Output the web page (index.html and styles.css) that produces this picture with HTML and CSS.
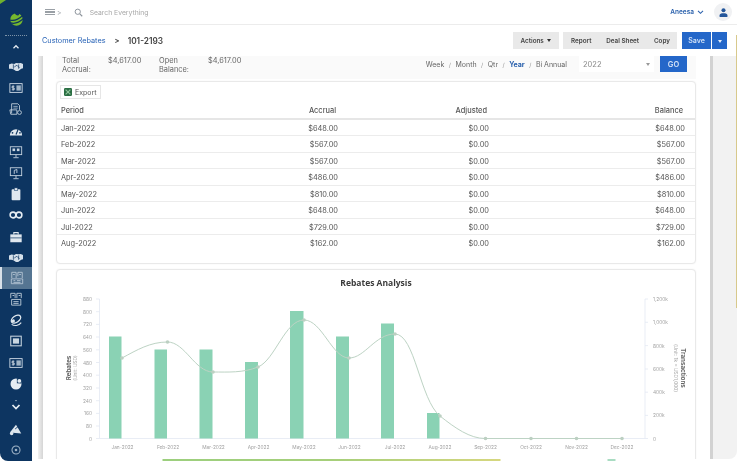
FILE: index.html
```html
<!DOCTYPE html>
<html lang="en">
<head>
<meta charset="utf-8">
<title>Customer Rebates</title>
<link rel="stylesheet" href="styles.css">
</head>
<body>
<div class="app">
  <nav class="side">
    <div class="logo">
      <svg viewBox="0 0 16 16" width="15" height="15"><circle cx="8" cy="8" r="6.6" fill="#76b82f"/><path d="M1 8.5C5 10 10 8 15 3.5M1.5 11.5C6 13 11 11 15.5 7" fill="none" stroke="#0d3561" stroke-width="1.3"/><path d="M6 .5C6.5 3 8.5 4 10.5 3.5L11 .5z" fill="#0d3561"/></svg>
    </div>
    <div class="rule"></div>
    <ul class="icons">
      <li class="nav-up"><svg viewBox="0 0 16 16"><path d="M4 10l4-4 4 4" fill="none" stroke="#e6edf3" stroke-width="2"/></svg></li>
      <li><svg viewBox="0 0 16 16"><path d="M0 5l3-1 3 .5 2-1 3 .2 2.500-.2 2.500 1v5l-2 .5-3.500 2.500H8L5 10.500 2.500 10 0 10z" fill="#d5e0ea"/><path d="M5 5v5M11 5v5M6 8l3-2 3 3" fill="none" stroke="#0d3561" stroke-width=".8"/></svg></li>
      <li><svg viewBox="0 0 16 16"><rect x="1" y="3" width="14" height="10" fill="none" stroke="#d5e0ea" stroke-width="1"/><rect x="8.500" y="5" width="5" height="6" fill="#9fb3c6"/><path d="M6.200 6H3.500v2h2.500v2H3.200M4.700 5v6" fill="none" stroke="#e6edf3" stroke-width=".8"/></svg></li>
      <li><svg viewBox="0 0 16 16"><path d="M3 13V2h7l2 2v5" fill="none" stroke="#c2d0dc" stroke-width="1"/><path d="M1 9h8v5H2z" fill="none" stroke="#c2d0dc" stroke-width="1"/><circle cx="12" cy="12" r="2.200" fill="none" stroke="#c2d0dc" stroke-width="1"/><path d="M5 5h5M5 7h5" stroke="#c2d0dc" stroke-width=".8"/></svg></li>
      <li><svg viewBox="0 0 16 16"><path d="M1 13a7 7 0 1 1 14 0z" fill="#e0e8ef"/><path d="M8 12l2.500-6" stroke="#0d3561" stroke-width="1.300"/><circle cx="4" cy="10" r="1" fill="#0d3561"/><circle cx="12.500" cy="10" r="1" fill="#0d3561"/></svg></li>
      <li><svg viewBox="0 0 16 16"><rect x="1.500" y="2" width="13" height="9" fill="none" stroke="#c9d6e1" stroke-width="1"/><path d="M8 11v3M5 14.500h6" stroke="#c9d6e1" stroke-width="1"/><rect x="4" y="4" width="3" height="3" fill="#c9d6e1"/><rect x="9" y="4" width="3" height="3" fill="#c9d6e1"/></svg></li>
      <li><svg viewBox="0 0 16 16"><rect x="1.500" y="2" width="13" height="9" fill="none" stroke="#c9d6e1" stroke-width="1"/><path d="M8 11v3M5 14.500h6" stroke="#c9d6e1" stroke-width="1"/><path d="M6 9V5l3-1v4" fill="none" stroke="#c9d6e1"/></svg></li>
      <li><svg viewBox="0 0 16 16"><rect x="3" y="2.500" width="10" height="12.500" rx="1" fill="#e0e8ef"/><rect x="6" y="1" width="4" height="3" fill="#e0e8ef" stroke="#0d3561" stroke-width=".6"/></svg></li>
      <li><svg viewBox="0 0 16 16"><circle cx="4.600" cy="8" r="3.300" fill="none" stroke="#e6edf3" stroke-width="1.800"/><circle cx="11.400" cy="8" r="3.300" fill="none" stroke="#e6edf3" stroke-width="1.800"/></svg></li>
      <li><svg viewBox="0 0 16 16"><path d="M1.500 5h13v9h-13z" fill="#e0e8ef"/><path d="M5.500 5V3h5v2" fill="none" stroke="#e0e8ef" stroke-width="1.200"/><path d="M1.500 9h13" stroke="#0d3561" stroke-width=".8"/></svg></li>
      <li><svg viewBox="0 0 16 16"><path d="M0 5l3-1 3 .5 2-1 3 .2 2.500-.2 2.500 1v5l-2 .5-3.500 2.500H8L5 10.500 2.500 10 0 10z" fill="#d5e0ea"/><path d="M5 5v5M11 5v5M6 8l3-2 3 3" fill="none" stroke="#0d3561" stroke-width=".8"/></svg></li>
      <li class="active"><svg viewBox="0 0 16 16"><path d="M2 8V1.500h5V8M9 6V1.500h5V8M1.500 9h13v5.500h-13z" fill="none" stroke="#c2d0dc" stroke-width=".9"/><path d="M4 11h2M8 11h4M4 13h8M3.500 4h2M10.500 4h2" stroke="#c2d0dc" stroke-width=".9"/></svg></li>
      <li><svg viewBox="0 0 16 16"><path d="M2 7V1.500h5V7M9 7V1.500h5V7M3 8.500h10.500V15H3z" fill="none" stroke="#c2d0dc" stroke-width="1"/><path d="M5 11h6M5 13h6M4 4h2M11 4h2" stroke="#c2d0dc" stroke-width="1"/></svg></li>
      <li><svg viewBox="0 0 16 16"><ellipse cx="8" cy="7" rx="6" ry="3.600" transform="rotate(-35 8 7)" fill="none" stroke="#e0e8ef" stroke-width="1.600"/><circle cx="5" cy="9" r="1.800" fill="#e0e8ef"/><path d="M3 13c3 2 8 2 11-2" fill="none" stroke="#e0e8ef" stroke-width="1.200"/></svg></li>
      <li><svg viewBox="0 0 16 16"><rect x="2" y="2.500" width="12" height="11" fill="none" stroke="#c9d6e1" stroke-width="1.200"/><rect x="4.500" y="5" width="7" height="6" fill="#c9d6e1"/></svg></li>
      <li><svg viewBox="0 0 16 16"><rect x="1" y="3" width="14" height="10" fill="none" stroke="#d5e0ea" stroke-width="1"/><rect x="8.500" y="5" width="5" height="6" fill="#9fb3c6"/><path d="M6.200 6H3.500v2h2.500v2H3.200M4.700 5v6" fill="none" stroke="#e6edf3" stroke-width=".8"/></svg></li>
      <li><svg viewBox="0 0 16 16"><circle cx="8" cy="8" r="6.300" fill="#e6edf3"/><path d="M9 1.500V7l5 .5A6 6 0 0 0 9 1.500z" fill="#0d3561"/><circle cx="11.800" cy="4.500" r="2.200" fill="#e6edf3"/></svg></li>
      <li class="nav-down"><svg viewBox="0 0 16 16"><path d="M7 3h2" stroke="#9fb3c6"/><path d="M4 8l4 4 4-4" fill="none" stroke="#e6edf3" stroke-width="2"/></svg></li>
      <li class="nav-sat"><svg viewBox="0 0 16 16"><path d="M1 12L8 3l6 10z" fill="#dce5ed"/><circle cx="3" cy="13" r="2" fill="#dce5ed"/><path d="M7 8l6-5" stroke="#0d3561" stroke-width="1"/></svg></li>
      <li><svg viewBox="0 0 16 16"><circle cx="8" cy="8" r="4.600" fill="none" stroke="#9fb3c6" stroke-width="1.200"/><circle cx="8" cy="8" r="1.500" fill="#9fb3c6"/></svg></li>
    </ul>
  </nav>

  <div class="main">
    <header class="top">
      <div class="burger"><span></span><span></span><span></span></div>
      <span class="burger-caret">&gt;</span>
      <svg class="search-icon" viewBox="0 0 12 12"><circle cx="5" cy="5" r="3.500" fill="none" stroke="#8b929a" stroke-width="1.300"/><path d="M7.700 7.700L11 11" stroke="#8b929a" stroke-width="1.500"/></svg>
      <span class="search-text">Search Everything</span>
      <span class="user">Aneesa</span>
      <svg class="user-caret" viewBox="0 0 8 6"><path d="M1 1l3 3 3-3" fill="none" stroke="#2c62ad" stroke-width="1.300"/></svg>
      <div class="avatar"><svg viewBox="0 0 12 12" width="9" height="9"><circle cx="6" cy="3" r="2.700" fill="#24569b"/><path d="M.8 12V9.500C.8 7.500 3 7 6 7s5.200.5 5.200 2.500V12z" fill="#24569b"/></svg></div>
    </header>

    <div class="crumbs">
      <a class="crumb-link">Customer Rebates</a>
      <span class="crumb-sep">&gt;</span>
      <span class="crumb-id">101-2193</span>
      <div class="actions">
        <button class="btn btn-actions">Actions <i class="tri"></i></button>
        <div class="btn-group">
          <button class="btn">Report</button>
          <button class="btn">Deal Sheet</button>
          <button class="btn">Copy</button>
        </div>
        <div class="save-group">
          <button class="save">Save</button>
          <button class="save save-caret"><i class="tri tri-white"></i></button>
        </div>
      </div>
    </div>

    <div class="body">
      <div class="gutter"><div class="gutter-bar"></div></div>
      <div class="content">
        <section class="summary">
          <div class="sum-label">Total<br>Accrual:</div>
          <div class="sum-value">$4,617.00</div>
          <div class="sum-label sum-label-2">Open<br>Balance:</div>
          <div class="sum-value sum-value-2">$4,617.00</div>
          <div class="periods">
            <span>Week</span><i>/</i><span>Month</span><i>/</i><span>Qtr</span><i>/</i><span class="on">Year</span><i>/</i><span>Bi Annual</span>
          </div>
          <div class="select">2022<i class="tri tri-grey"></i></div>
          <button class="go">GO</button>
        </section>

        <section class="card table-card">
          <div class="toolbar">
            <button class="export">
              <svg viewBox="0 0 10 10" width="8" height="8"><rect width="10" height="10" rx="1.500" fill="#2a6e43"/><path d="M2 2l6 6M8 2L2 8" stroke="#8fc39a" stroke-width="1.500"/></svg>
              Export
            </button>
          </div>
          <table class="grid">
            <colgroup><col class="c1"><col class="c2"><col class="c3"><col class="c4"><col class="c5"></colgroup>
            <thead><tr><th class="l">Period</th><th>Accrual</th><th>Adjusted</th><th>Balance</th><th></th></tr></thead>
            <tbody>
              <tr><td class="l">Jan-2022</td><td>$648.00</td><td>$0.00</td><td>$648.00</td><td></td></tr>
              <tr><td class="l">Feb-2022</td><td>$567.00</td><td>$0.00</td><td>$567.00</td><td></td></tr>
              <tr><td class="l">Mar-2022</td><td>$567.00</td><td>$0.00</td><td>$567.00</td><td></td></tr>
              <tr><td class="l">Apr-2022</td><td>$486.00</td><td>$0.00</td><td>$486.00</td><td></td></tr>
              <tr><td class="l">May-2022</td><td>$810.00</td><td>$0.00</td><td>$810.00</td><td></td></tr>
              <tr><td class="l">Jun-2022</td><td>$648.00</td><td>$0.00</td><td>$648.00</td><td></td></tr>
              <tr><td class="l">Jul-2022</td><td>$729.00</td><td>$0.00</td><td>$729.00</td><td></td></tr>
              <tr><td class="l">Aug-2022</td><td>$162.00</td><td>$0.00</td><td>$162.00</td><td></td></tr>
            </tbody>
          </table>
        </section>

        <section class="card chart-card">
          <h2 class="chart-title">Rebates Analysis</h2>
          <svg class="chart" viewBox="57 288 638 173" width="638" height="173">
            <g class="ax">
              <path d="M99.500 299V438.500H645M645 299V438.500"/>
              <path d="M96 299h3.500M96 311.700h3.500M96 324.400h3.500M96 337h3.500M96 349.800h3.500M96 362.500h3.500M96 375.200h3.500M96 388h3.500M96 400.700h3.500M96 413.400h3.500M96 426h3.500M96 438.500h3.500M645 299h3M645 322.300h3M645 345.600h3M645 369h3M645 392.200h3M645 415.400h3M645 438.500h3"/>
            </g>
            <g class="bars">
              <rect x="109" y="336.500" width="12.500" height="102"/>
              <rect x="154.500" y="349.500" width="12.500" height="89"/>
              <rect x="199.500" y="349.500" width="13" height="89"/>
              <rect x="245" y="362" width="13" height="76.500"/>
              <rect x="290" y="311" width="13.500" height="127.500"/>
              <rect x="336" y="336.500" width="13" height="102"/>
              <rect x="381" y="323.500" width="13" height="115"/>
              <rect x="427" y="413" width="12.500" height="25.500"/>
            </g>
            <path class="curve" d="M122 358C137 350 150 342 167.500 342C185 342 195 372 213 372C228 372 243 373 258 367C275 360 285 320 304 320C322 320 332 358 349 358C365 358 375 334 395 334C415 334 420 400 440 416C455 428 470 438.500 485 438.500H621.500"/>
            <g class="dots">
              <circle cx="122" cy="358" r="1.800"/><circle cx="167.500" cy="342" r="1.800"/><circle cx="213" cy="372" r="1.800"/><circle cx="258" cy="367" r="1.800"/><circle cx="304" cy="320" r="1.800"/><circle cx="349" cy="358" r="1.800"/><circle cx="395" cy="334" r="1.800"/><circle cx="440" cy="416" r="1.800"/>
              <circle cx="485.500" cy="438.500" r="1.800"/><circle cx="531" cy="438.500" r="1.800"/><circle cx="576.500" cy="438.500" r="1.800"/><circle cx="622" cy="438.500" r="1.800"/>
            </g>
            <g class="tick-y">
              <text x="92" y="301">880</text><text x="92" y="313.700">800</text><text x="92" y="326.400">720</text><text x="92" y="339">640</text><text x="92" y="351.800">560</text><text x="92" y="364.500">480</text><text x="92" y="377.200">400</text><text x="92" y="390">320</text><text x="92" y="402.700">240</text><text x="92" y="415.400">160</text><text x="92" y="428">80</text><text x="92" y="440.500">0</text>
            </g>
            <g class="tick-r">
              <text x="653" y="301">1,200k</text><text x="653" y="324.300">1,000k</text><text x="653" y="347.600">800k</text><text x="653" y="371">600k</text><text x="653" y="394.200">400k</text><text x="653" y="417.400">200k</text><text x="653" y="440.500">0</text>
            </g>
            <g class="tick-x">
              <text x="122.500" y="449">Jan-2022</text><text x="168" y="449">Feb-2022</text><text x="213.500" y="449">Mar-2022</text><text x="258.500" y="449">Apr-2022</text><text x="304" y="449">May-2022</text><text x="349.500" y="449">Jun-2022</text><text x="395" y="449">Jul-2022</text><text x="440" y="449">Aug-2022</text><text x="485.500" y="449">Sep-2022</text><text x="531" y="449">Oct-2022</text><text x="576.500" y="449">Nov-2022</text><text x="622" y="449">Dec-2022</text>
            </g>
            <text class="ax-name" transform="translate(71 368) rotate(-90)">Rebates</text>
            <text class="ax-unit" transform="translate(77 368) rotate(-90)">(Unit: USD)</text>
            <text class="ax-name" transform="translate(681 368) rotate(90)">Transactions</text>
            <text class="ax-unit" transform="translate(674 368) rotate(90)">(Unit: 1k = USD1,000)</text>
          </svg>
        </section>
      </div>
      <div class="right-gap"></div>
      <div class="scroll-bar"></div>
      <div class="scroll-track"></div>
    </div>
    <div class="strip"></div>
  </div>
  <div class="corner-green"></div>
  <div class="edge-line"></div>
</div>
</body>
</html>
```

FILE: styles.css
```css
* { box-sizing: border-box; }
html, body { margin: 0; padding: 0; background: #fff; }
body { font-family: Inter, "Liberation Sans", sans-serif; color: #555; }
button { font-family: inherit; border: 0; padding: 0; }
.app { position: relative; display: flex; width: 737px; height: 461px; overflow: hidden; background: #fff; filter: blur(.45px); }
.corner-green { position: absolute; left: 0; top: 0; width: 0; height: 0; border-top: 4px solid #6fb12e; border-right: 6px solid transparent; }
.edge-line { position: absolute; right: 0; top: 35px; width: 1px; height: 273px; background: #d8c98c; }

.side { width: 32px; flex: none; background: #0d3561; border-bottom-left-radius: 8px; display: flex; flex-direction: column; align-items: center; }
.logo { height: 32px; margin-top: 4px; display: flex; align-items: center; justify-content: center; }
.rule { width: 22px; border-top: 1px dotted #7d93a8; margin-top: 1px; }
.icons { list-style: none; margin: 1px 0 0; padding: 0; width: 100%; }
.icons li { height: 21.2px; display: flex; align-items: center; justify-content: center; }
.icons svg { width: 14px; height: 14px; }
.icons .nav-up { height: 19px; }
.icons .nav-up svg { width: 10px; height: 10px; }
.icons .active { background: #557592; border-left: 2px solid #d9e1e8; margin-top: -1px; }
.icons .nav-sat { margin-top: 3px; }

.main { flex: 1; min-width: 0; display: flex; flex-direction: column; }
.top { height: 25px; flex: none; display: flex; align-items: center; border-bottom: 1px solid #ececec; padding-left: 13px; padding-right: 5px; }
.burger { width: 10px; display: flex; flex-direction: column; gap: 1.500px; }
.burger span { display: block; height: 1.300px; background: #9aa0a6; }
.burger-caret { font-size: 7px; color: #9aa0a6; margin-left: 2px; }
.search-icon { width: 9px; height: 9px; margin-left: 12px; }
.search-text { font-size: 6.800px; color: #a8a8a8; margin-left: 7px; }
.user { margin-left: auto; font-size: 6.500px; font-weight: 600; color: #2c62ad; }
.user-caret { width: 7px; height: 5px; margin-left: 3px; }
.avatar { width: 18px; height: 18px; border-radius: 50%; background: #f0f1f3; margin-left: 10px; display: flex; align-items: center; justify-content: center; }

.crumbs { height: 31px; flex: none; display: flex; align-items: center; padding: 0 10px 0 10px; }
.crumb-link { font-size: 7.300px; color: #2c66b8; }
.crumb-sep { font-size: 7.500px; font-weight: 700; color: #444; margin-left: 9px; }
.crumb-id { font-size: 8.300px; font-weight: 600; color: #444; margin-left: 8px; }
.actions { margin-left: auto; display: flex; align-items: center; }
.btn { height: 17px; background: #e9e9e9; color: #444; font-size: 6.300px; font-weight: 600; padding: 0; white-space: nowrap; }
.btn-actions { width: 46px; margin-right: 4px; }
.btn-group { display: flex; background: #e9e9e9; width: 114px; justify-content: space-between; padding: 0 7px 0 8px; }
.save-group { display: flex; margin-left: 5px; gap: 1px; }
.save { height: 17px; width: 29px; background: #2467c9; color: #cfe0f7; font-size: 7px; font-weight: 600; }
.save-caret { width: 15px; }
.tri { display: inline-block; width: 0; height: 0; border: 2.500px solid transparent; border-top: 3px solid #333; border-bottom: 0; vertical-align: middle; margin-left: 2px; }
.tri-white { border-top-color: #e6effa; margin-left: 0; }
.tri-grey { border-top-color: #999; margin-left: auto; }

.body { flex: 1; min-height: 0; display: flex; overflow: hidden; }
.gutter { width: 24px; flex: none; padding-left: 6px; }
.gutter-bar { width: 5px; height: 100%; background: linear-gradient(90deg, #f1f1f1, #d5d5d5); }
.content { width: 640px; flex: none; }
.right-gap { width: 14px; flex: none; }
.scroll-bar { width: 3px; flex: none; background: #d2d2d2; }
.scroll-track { flex: 1; background: #f2f2f2; border-bottom-right-radius: 8px; }

.summary { height: 23px; background: #fafafa; display: flex; align-items: flex-start; font-size: 7.400px; line-height: 9px; color: #666; padding: 0 9px 0 6px; margin-bottom: 2px; }
.sum-label { width: 46px; }
.sum-value { width: 51px; }
.sum-label-2 { width: 49px; }
.sum-value-2 { width: 40px; }
.periods { margin-left: auto; display: flex; align-items: center; height: 16px; white-space: nowrap; font-size: 7px; }
.periods span { display: block; }
.periods i { font-style: normal; font-size: 6px; color: #999; margin: 0 4.500px; }
.periods .on { color: #2c62ad; font-weight: 700; }
.select { width: 75px; height: 16px; background: #fff; margin-left: 12px; display: flex; align-items: center; padding: 0 4px; color: #888; font-size: 7.500px; }
.go { width: 27px; height: 16px; background: #2467c9; color: #d5e3f7; font-size: 7.500px; font-weight: 600; margin-left: 6px; }

.card { background: #fff; border: 1px solid #e9e9e9; border-radius: 4px; box-shadow: 0 0 2px rgba(0,0,0,.06); }
.table-card { height: 183px; margin-bottom: 5px; }
.toolbar { padding: 3px 0 0 3px; height: 20px; }
.export { height: 14px; width: 41px; background: #fff; border: 1px solid #e6e6e6; display: flex; align-items: center; gap: 3px; padding-left: 3px; font-size: 7px; color: #555; }
.grid { width: 638px; table-layout: fixed; border-collapse: collapse; font-size: 7.400px; color: #555; }
.c1 { width: 100px; }
.c2 { width: 181px; }
.c3 { width: 151px; }
.c4 { width: 196px; }
.c5 { width: 10px; }
.grid th { height: 17px; font-weight: 500; text-align: right; padding: 0 2px 0 0; border-bottom: 2px solid #e6e6e6; color: #555; font-size: 7.400px; }
.grid td { height: 16px; text-align: right; padding: 2px 0 0; border-bottom: 1px solid #ececec; }
.grid tbody tr:nth-child(even) td { height: 17px; }
.grid tbody tr:last-child td { border-bottom: 0; }
.grid .l { text-align: left; padding-left: 4px; }

.chart-card { height: 200px; }
.chart-title { margin: 8px 0 0; height: 10px; line-height: 10px; font-size: 8.500px; font-weight: 700; color: #3b3b3b; text-align: center; font-family: "Open Sans", sans-serif; }
.chart { display: block; }
.ax path { fill: none; stroke: #e3e9f2; stroke-width: .8; }
.bars rect { fill: #8ad2b4; }
.curve { fill: none; stroke: #bdd3c4; stroke-width: 1; }
.dots circle { fill: #bcd0c2; }
.chart text { font-family: Inter, sans-serif; }
.tick-y text { font-size: 4.800px; fill: #a0a0a0; text-anchor: end; }
.tick-r text { font-size: 4.800px; fill: #a0a0a0; }
.tick-x text { font-size: 4.800px; fill: #a0a0a0; text-anchor: middle; }
.ax-name { font-size: 6.200px; font-weight: 700; fill: #666; text-anchor: middle; }
.ax-unit { font-size: 4.800px; fill: #aaa; text-anchor: middle; }

.strip { height: 2px; flex: none; background: linear-gradient(90deg, #fff 0, #fff 130px, #9ccf7e 131px, #a6cf7a 300px, #d6d77f 468px, #fff 469px, #fff 575px, #a9dcc2 576px, #a9dcc2 583px, #fff 584px); }
```
